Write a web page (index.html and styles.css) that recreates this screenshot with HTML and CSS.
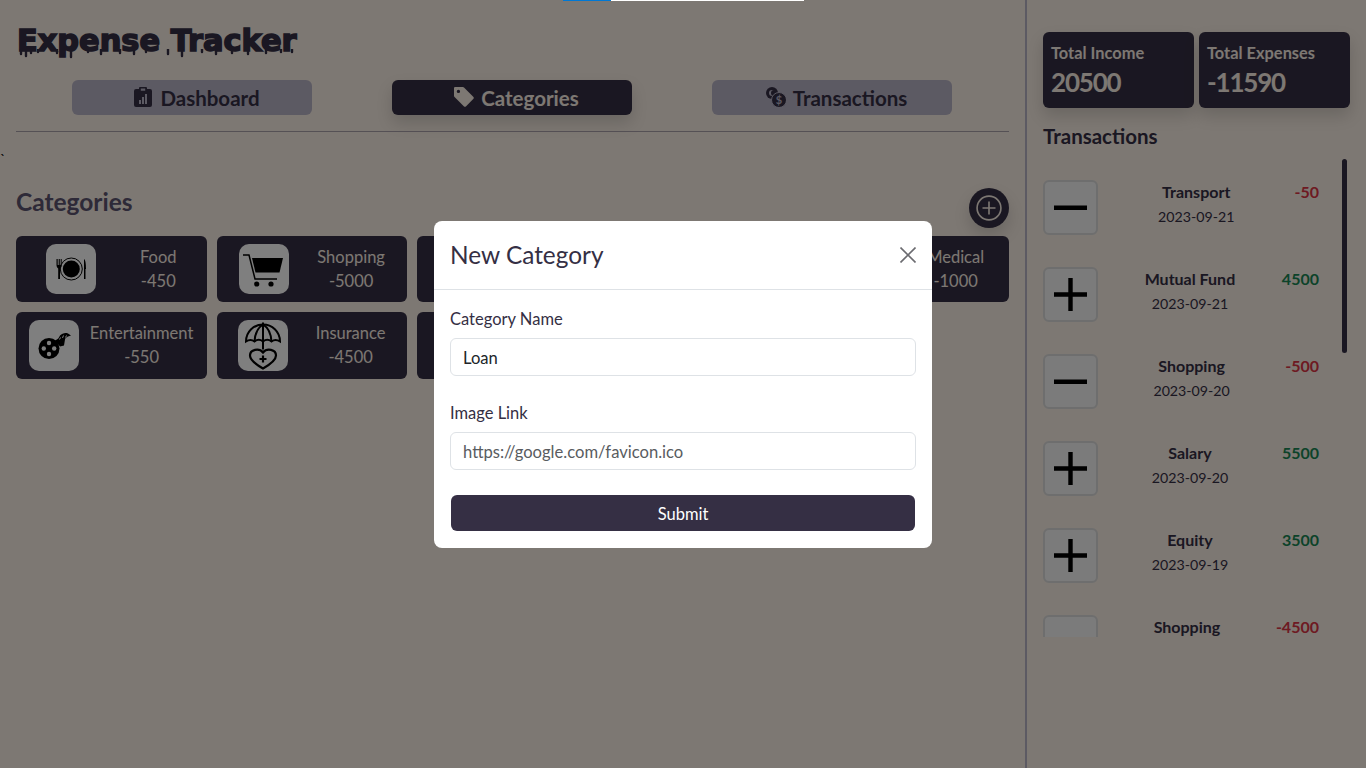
FILE: index.html
```html
<!DOCTYPE html>
<html lang="en">
<head>
    <meta charset="UTF-8">
    <meta name="viewport" content="width=device-width, initial-scale=1.0">
    <title>Expense Tracker</title>
    <link rel="stylesheet" href="styles.css">
</head>
<body>
    <div class="app">
        <main class="main">
            <div class="brand-wrap">
                <h1 class="brand">Expense Tracker</h1>
                <svg class="drips" viewBox="0 0 290 10"><path d="M5 0v5M10 0v7M15 0v4M22 0v3M41 0v4M55 0v8M72 0v3M85 0v5M104 0v4M118 0v5M130 0v3M152 0v5M166 0v7M186 0v3M200 0v5M216 0v4M232 0v5M250 0v4M265 0v3M276 0v3" stroke="#352f44" stroke-width="2.400" stroke-linecap="round"/></svg>
            </div>

            <nav class="tabs">
                <a class="tab" href="#">
                    <svg class="tab-icon" viewBox="0 0 18 20"><path d="M6 0h6a1 1 0 0 1 1 1v1h3a2 2 0 0 1 2 2v14a2 2 0 0 1-2 2H2a2 2 0 0 1-2-2V4a2 2 0 0 1 2-2h3V1a1 1 0 0 1 1-1zm.8 1.6v2.2h4.4V1.6z" fill="#352f44" fill-rule="evenodd"/><path d="M5 13h2v4H5zM8 10h2v7H8zM11 7h2v10h-2z" fill="#b9b4c7"/></svg>
                    Dashboard
                </a>
                <a class="tab active" href="#">
                    <svg class="tab-icon" viewBox="0 0 18 18"><path d="M1 0h7a1.5 1.5 0 0 1 1 .5l8.300 8.300a1.500 1.500 0 0 1 0 2.100l-6.400 6.400a1.500 1.500 0 0 1-2.100 0L.5 9a1.500 1.500 0 0 1-.5-1V1a1 1 0 0 1 1-1zm3 5.500a1.500 1.500 0 1 0 0-3 1.500 1.500 0 0 0 0 3z" fill="#faf0e6" fill-rule="evenodd"/></svg>
                    Categories
                </a>
                <a class="tab" href="#">
                    <svg class="tab-icon" viewBox="0 0 20 20"><circle cx="6" cy="6" r="6" fill="#352f44"/><circle cx="6" cy="6" r="3" fill="#b9b4c7"/><circle cx="8" cy="6" r="3" fill="#352f44"/><circle cx="13" cy="13" r="7.500" fill="#352f44" stroke="#b9b4c7"/><text class="coin-mark" x="13" y="17" text-anchor="middle">$</text></svg>
                    Transactions
                </a>
            </nav>
            <hr class="rule">
            <span class="stray">`</span>

            <div class="section-head">
                <h2 class="section-title">Categories</h2>
                <button class="add-btn" type="button" aria-label="Add category">
                    <svg viewBox="0 0 24 24" width="26" height="26" fill="none" stroke="#faf0e6" stroke-width="1.500"><circle cx="12" cy="12" r="11"/><path d="M12 6v12M6 12h12"/></svg>
                </button>
            </div>

            <div class="cat-grid">
                <div class="cat-card">
                    <div class="cat-icon">
                        <svg viewBox="0 0 50 50"><circle cx="25.300" cy="25" r="11" fill="none" stroke="#000"/><circle cx="25.300" cy="25" r="8.500"/><path d="M10.500 15v6c0 2 1 3 1.700 3.500V35h1.800V24.500c.7-.5 1.700-1.500 1.700-3.500v-6h-1v6h-.9v-6h-1.100v6h-1v-6zM38 35V15c1.500 1 2 5 2 10h-.5v10z"/></svg>
                    </div>
                    <div class="cat-text"><span>Food</span><span>-450</span></div>
                </div>
                <div class="cat-card">
                    <div class="cat-icon">
                        <svg viewBox="0 0 50 50"><path d="M13 14h31l-3.500 14.500H16.500z"/><path d="M4 11h6l6 24h22" fill="none" stroke="#000" stroke-width="1.500"/><circle cx="17.700" cy="40" r="2.600"/><circle cx="32" cy="40" r="2.600"/></svg>
                    </div>
                    <div class="cat-text"><span>Shopping</span><span>-5000</span></div>
                </div>
                <div class="cat-card"></div>
                <div class="cat-card"></div>
                <div class="cat-card">
                    <div class="cat-icon"></div>
                    <div class="cat-text"><span>Medical</span><span>-1000</span></div>
                </div>
                <div class="cat-card">
                    <div class="cat-icon">
                        <svg viewBox="0 0 50 50"><path d="M26 20c3-1 4-3 5-5 2-2 5-3 8-2l3 2-3 1c-2 1-3 2-3 3l-1 6-4 1z"/><path d="M31.500 17l-1 2M34.500 15l-1 2.500M37.500 15l-1 2" stroke="#fff"/><circle cx="20" cy="28" r="10.500"/><g fill="#fff"><circle cx="20" cy="22.500" r="2.200"/><circle cx="20" cy="33.500" r="2.200"/><circle cx="14.800" cy="28" r="2.200"/><circle cx="25.200" cy="28" r="2.200"/></g></svg>
                    </div>
                    <div class="cat-text"><span>Entertainment</span><span>-550</span></div>
                </div>
                <div class="cat-card">
                    <div class="cat-icon">
                        <svg viewBox="0 0 50 50" fill="none" stroke="#000" stroke-width="2"><path d="M8 21C8 11 16 4 25 4s17 7 17 17c-3-2-6-2-8.500 0-2.500-2-6-2-8.500 0-2.500-2-6-2-8.500 0C14 19 11 19 8 21z"/><path d="M25 4c-5 3-8 9-8.500 17M25 4c5 3 8 9 8.500 17M25 2v27"/><path d="M25 48c-7-4-13-8-13-13 0-6 9-8 13-3 4-5 13-3 13 3 0 5-6 9-13 13z" stroke-width="2.200"/><path d="M25 35v7M21.500 38.500h7" stroke-width="2.200"/></svg>
                    </div>
                    <div class="cat-text"><span>Insurance</span><span>-4500</span></div>
                </div>
                <div class="cat-card"></div>
            </div>
        </main>

        <aside class="side">
            <div class="totals">
                <div class="total-card">
                    <span class="total-label">Total Income</span>
                    <span class="total-value">20500</span>
                </div>
                <div class="total-card">
                    <span class="total-label">Total Expenses</span>
                    <span class="total-value">-11590</span>
                </div>
            </div>
            <h3 class="side-title">Transactions</h3>

            <div class="tx-wrap">
                <div class="tx-list">
                    <div class="tx-row">
                        <div class="tx-sign"><svg viewBox="0 0 33 33"><path d="M0 14.500h33v4.500H0z"/></svg></div>
                        <div class="tx-info"><span class="tx-name">Transport</span><span class="tx-date">2023-09-21</span></div>
                        <span class="tx-amount minus">-50</span>
                    </div>
                    <div class="tx-row">
                        <div class="tx-sign"><svg viewBox="0 0 33 33"><path d="M14.300 0h4.400v14.300H33v4.400H18.700V33h-4.400V18.700H0v-4.400h14.300z"/></svg></div>
                        <div class="tx-info"><span class="tx-name">Mutual Fund</span><span class="tx-date">2023-09-21</span></div>
                        <span class="tx-amount plus">4500</span>
                    </div>
                    <div class="tx-row">
                        <div class="tx-sign"><svg viewBox="0 0 33 33"><path d="M0 14.500h33v4.500H0z"/></svg></div>
                        <div class="tx-info"><span class="tx-name">Shopping</span><span class="tx-date">2023-09-20</span></div>
                        <span class="tx-amount minus">-500</span>
                    </div>
                    <div class="tx-row">
                        <div class="tx-sign"><svg viewBox="0 0 33 33"><path d="M14.300 0h4.400v14.300H33v4.400H18.700V33h-4.400V18.700H0v-4.400h14.300z"/></svg></div>
                        <div class="tx-info"><span class="tx-name">Salary</span><span class="tx-date">2023-09-20</span></div>
                        <span class="tx-amount plus">5500</span>
                    </div>
                    <div class="tx-row">
                        <div class="tx-sign"><svg viewBox="0 0 33 33"><path d="M14.300 0h4.400v14.300H33v4.400H18.700V33h-4.400V18.700H0v-4.400h14.300z"/></svg></div>
                        <div class="tx-info"><span class="tx-name">Equity</span><span class="tx-date">2023-09-19</span></div>
                        <span class="tx-amount plus">3500</span>
                    </div>
                    <div class="tx-row">
                        <div class="tx-sign"></div>
                        <div class="tx-info"><span class="tx-name">Shopping</span></div>
                        <span class="tx-amount minus">-4500</span>
                    </div>
                </div>
                <div class="tx-thumb"></div>
            </div>
        </aside>
    </div>

    <div class="load-bar"><span class="load-done"></span><span class="load-rest"></span></div>

    <div class="backdrop">
        <form class="modal">
            <div class="modal-head">
                <h4 class="modal-title">New Category</h4>
                <button class="close-btn" type="button" aria-label="Close">
                    <svg viewBox="0 0 16 16" width="16" height="16" fill="none" stroke="#6b6b70" stroke-width="1.600"><path d="M.5.500l15 15M15.500.500l-15 15"/></svg>
                </button>
            </div>
            <div class="modal-body">
                <label class="field-label" for="catName">Category Name</label>
                <input class="field-input" type="text" id="catName" value="Loan">

                <label class="field-label" for="catImage">Image Link</label>
                <input class="field-input" type="text" id="catImage" placeholder="https://google.com/favicon.ico">

                <button class="submit-btn" type="button">Submit</button>
            </div>
        </form>
    </div>
</body>
</html>
```

FILE: styles.css
```css
* {
    box-sizing: border-box;
}

body {
    margin: 0;
    height: 768px;
    overflow: hidden;
    background-color: #faf0e6;
    font-family: Lato, "Open Sans", sans-serif;
    color: #352f44;
}

h1, h2, h3, h4 {
    margin: 0;
}

.app {
    display: flex;
    height: 768px;
}

.main {
    width: 1025px;
    padding: 0 16px;
}

.brand-wrap {
    position: relative;
    height: 80px;
}

.brand {
    padding: 24px 0 0 1px;
    font-family: "DejaVu Sans", sans-serif;
    font-size: 30.400px;
    line-height: 34px;
    font-weight: 700;
    -webkit-text-stroke: 1.6px #352f44;
}

.drips {
    position: absolute;
    left: 0;
    top: 49px;
    width: 290px;
    height: 10px;
}

.tabs {
    display: flex;
    justify-content: center;
    gap: 80px;
    padding-right: 2px;
}

.tab {
    display: flex;
    align-items: center;
    justify-content: center;
    gap: 7px;
    width: 240px;
    height: 35px;
    padding-left: 10px;
    border-radius: 6px;
    background-color: #b9b4c7;
    color: #352f44;
    font-size: 20.500px;
    font-weight: 700;
    text-decoration: none;
}

.tab.active {
    background-color: #352f44;
    color: #faf0e6;
    box-shadow: 0 8px 16px rgba(0, 0, 0, 0.15);
}

.tab-icon {
    width: 20px;
    height: 20px;
    margin-top: -2px;
}

.coin-mark {
    font-size: 11px;
    font-weight: 700;
    fill: #b9b4c7;
}

.rule {
    margin: 16px 0 0;
    border: 0;
    border-top: 1px solid #5c5470;
    opacity: 0.5;
}

.stray {
    position: absolute;
    left: 0;
    top: 152px;
    font-size: 14px;
    line-height: 14px;
    color: #000;
}

.section-head {
    display: flex;
    justify-content: space-between;
    margin-top: 56px;
    height: 48px;
}

.section-title {
    font-size: 24.500px;
    line-height: 28px;
    font-weight: 700;
    color: #5c5470;
}

.add-btn {
    display: flex;
    align-items: center;
    justify-content: center;
    width: 40px;
    height: 40px;
    padding: 0;
    border: 0;
    border-radius: 50%;
    background-color: #352f44;
    box-shadow: 0 8px 16px rgba(0, 0, 0, 0.15);
}

.cat-grid {
    display: grid;
    grid-template-columns: repeat(5, 1fr);
    gap: 10px;
}

.cat-card {
    display: flex;
    justify-content: space-around;
    align-items: flex-start;
    padding: 8px;
    border-radius: 6px;
    background-color: #352f44;
    color: #faf0e6;
}

.cat-icon {
    flex: none;
    width: 50px;
    height: 50px;
    border-radius: 10px;
    background-color: #fff;
    overflow: hidden;
}

.cat-card:nth-child(n+6) .cat-icon {
    height: 51px;
}

.cat-icon svg {
    display: block;
    width: 100%;
    height: 100%;
}

.cat-text {
    display: flex;
    flex-direction: column;
    align-items: center;
    margin-top: 1px;
    font-size: 16.500px;
    line-height: 24px;
}

.side {
    width: 341px;
    padding: 32px 16px 0 16px;
    border-left: 2px solid #b9b4c7;
}

.totals {
    display: flex;
    gap: 5px;
}

.total-card {
    display: flex;
    flex-direction: column;
    width: 151px;
    height: 76px;
    padding: 9px 8px;
    border-radius: 6px;
    background-color: #352f44;
    color: #faf0e6;
    box-shadow: 0 8px 16px rgba(0, 0, 0, 0.15);
}

.total-label {
    font-size: 16.400px;
    line-height: 24px;
    font-weight: 700;
}

.total-value {
    font-size: 26px;
    line-height: 34px;
    font-weight: 700;
    letter-spacing: -1.2px;
}

.side-title {
    margin-top: 15px;
    font-size: 20.500px;
    line-height: 26px;
    font-weight: 700;
}

.tx-wrap {
    display: flex;
    height: 478px;
    margin-top: 10px;
    overflow: hidden;
}

.tx-list {
    width: 299px;
    padding: 21px 23px 0 0;
}

.tx-row {
    display: flex;
    justify-content: space-between;
    align-items: flex-start;
    height: 55px;
    margin-bottom: 32px;
}

.tx-sign {
    display: flex;
    align-items: center;
    justify-content: center;
    width: 55px;
    height: 55px;
    border: 2px solid #dcdcdc;
    border-radius: 6px;
    background-color: #f6f6f6;
}

.tx-sign svg {
    width: 33px;
    height: 33px;
}

.tx-info {
    display: flex;
    flex-direction: column;
    align-items: center;
}

.tx-name {
    font-size: 16px;
    line-height: 24px;
    font-weight: 700;
}

.tx-date {
    padding-top: 1px;
    font-size: 14.200px;
    line-height: 24px;
}

.tx-amount {
    font-size: 16px;
    line-height: 24px;
    font-weight: 700;
}

.tx-amount.minus {
    color: #dc3545;
}

.tx-amount.plus {
    color: #198754;
}

.tx-thumb {
    flex: none;
    width: 5px;
    height: 194px;
    border-radius: 3px;
    background-color: #352f44;
}

.load-bar {
    position: fixed;
    top: 0;
    left: 563px;
    z-index: 20;
    display: flex;
    height: 1px;
}

.load-done {
    width: 48px;
    background-color: #0078d4;
}

.load-rest {
    width: 193px;
    background-color: #fff;
}

.backdrop {
    position: fixed;
    top: 0;
    left: 0;
    z-index: 10;
    display: flex;
    align-items: center;
    justify-content: center;
    width: 100%;
    height: 100%;
    background-color: rgba(0, 0, 0, 0.5);
}

.modal {
    width: 498px;
    height: 327px;
    border-radius: 8px;
    background-color: #fff;
}

.modal-head {
    display: flex;
    justify-content: space-between;
    align-items: center;
    height: 69px;
    padding: 0 16px;
    border-bottom: 1px solid #dee2e6;
}

.modal-title {
    font-size: 24.400px;
    line-height: 30px;
    font-weight: 400;
}

.close-btn {
    display: flex;
    padding: 0;
    border: 0;
    background: none;
}

.modal-body {
    padding: 17px 16px;
}

.field-label {
    display: block;
    margin-bottom: 7px;
    font-size: 16.500px;
    line-height: 24px;
}

.field-input {
    display: block;
    width: 100%;
    height: 38px;
    margin-bottom: 25px;
    padding: 2px 12px 0;
    border: 1px solid #dee2e6;
    border-radius: 6px;
    font-family: inherit;
    font-size: 16.600px;
    color: #212529;
}

.field-input::placeholder {
    color: #595c5f;
}

.submit-btn {
    display: block;
    width: 464px;
    height: 36px;
    margin: 0 1px;
    padding-top: 3px;
    border: 0;
    border-radius: 6px;
    background-color: #352f44;
    color: #fff;
    font-family: inherit;
    font-size: 16.500px;
}
```
